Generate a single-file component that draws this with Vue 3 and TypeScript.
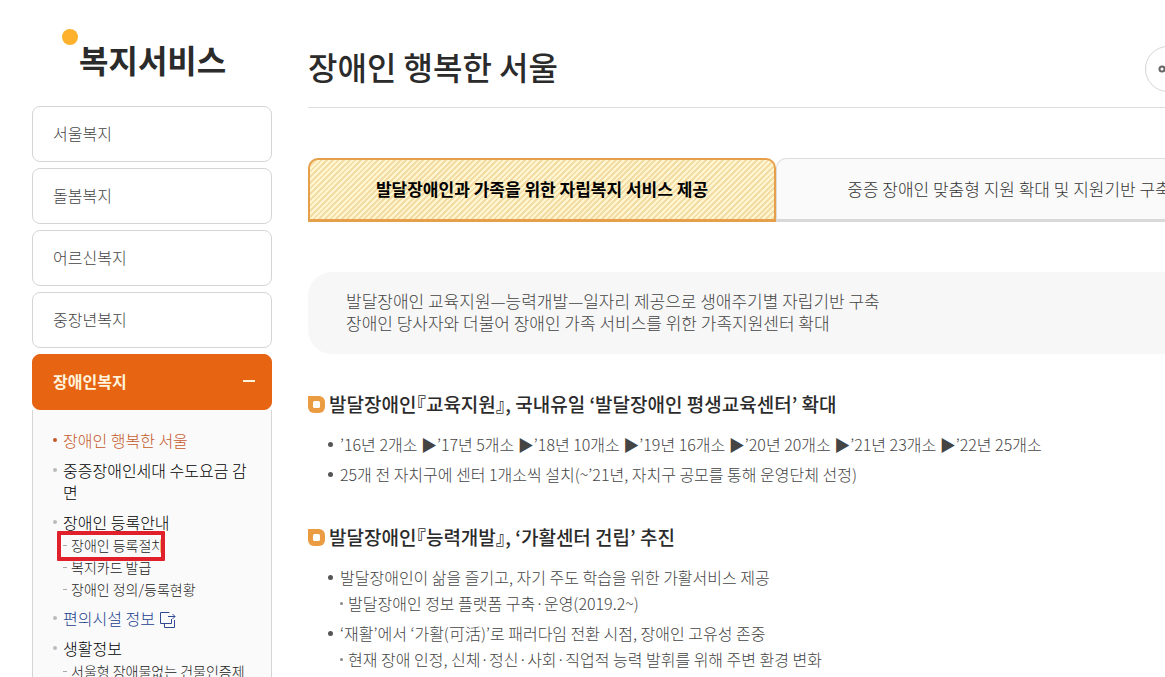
<script setup lang="ts">
interface SubItem {
  label: string
  marked?: boolean
}
interface MenuItem {
  label: string
  current?: boolean
  external?: boolean
  children?: SubItem[]
}
interface Point {
  text: string
  notes?: string[]
}
interface Section {
  title: string
  points: Point[]
}

const categories: string[] = ['서울복지', '돌봄복지', '어르신복지', '중장년복지']

const menu: MenuItem[] = [
  { label: '장애인 행복한 서울', current: true },
  { label: '중증장애인세대 수도요금 감면' },
  {
    label: '장애인 등록안내',
    children: [
      { label: '장애인 등록절차', marked: true },
      { label: '복지카드 발급' },
      { label: '장애인 정의/등록현황' },
    ],
  },
  { label: '편의시설 정보', external: true },
  { label: '생활정보', children: [{ label: '서울형 장애물없는 건물인증제' }] },
]

const tabs: string[] = [
  '발달장애인과 가족을 위한 자립복지 서비스 제공',
  '중증 장애인 맞춤형 지원 확대 및 지원기반 구축',
]

const sections: Section[] = [
  {
    title: '발달장애인『교육지원』, 국내유일 ‘발달장애인 평생교육센터’ 확대',
    points: [
      {
        text: '’16년 2개소 ▶’17년 5개소 ▶’18년 10개소 ▶’19년 16개소 ▶’20년 20개소 ▶’21년 23개소 ▶’22년 25개소',
      },
      { text: '25개 전 자치구에 센터 1개소씩 설치(~’21년, 자치구 공모를 통해 운영단체 선정)' },
    ],
  },
  {
    title: '발달장애인『능력개발』, ‘가활센터 건립’ 추진',
    points: [
      {
        text: '발달장애인이 삶을 즐기고, 자기 주도 학습을 위한 가활서비스 제공',
        notes: ['발달장애인 정보 플랫폼 구축·운영(2019.2~)'],
      },
      {
        text: '‘재활’에서 ‘가활(可活)’로 패러다임 전환 시점, 장애인 고유성 존중',
        notes: ['현재 장애 인정, 신체·정신·사회·직업적 능력 발휘를 위해 주변 환경 변화'],
      },
    ],
  },
]
</script>

<template>
  <div class="viewport">
    <div class="page">
      <aside class="side">
        <h2 class="side-title">복지서비스</h2>
        <nav class="side-nav">
          <a v-for="c in categories" :key="c" class="cat" href="#">{{ c }}</a>
          <div class="open-group">
            <button class="cat cat-open" type="button" aria-expanded="true">
              장애인복지
              <span class="minus"></span>
            </button>
            <ul class="menu">
              <li v-for="m in menu" :key="m.label" :class="{ current: m.current, external: m.external }">
                <a href="#">{{ m.label }}<svg v-if="m.external" class="ext" viewBox="0 0 16 16" width="16" height="16" aria-hidden="true"><path d="M9.5 .5h-9v11h11V7M4.500 12v3.500h10V8M8 4.500h7M12.500 2l2.500 2.500-2.500 2.500" /></svg></a>
                <ul v-if="m.children" class="sub">
                  <li v-for="s in m.children" :key="s.label" :class="{ marked: s.marked }">
                    <a href="#">{{ s.label }}</a>
                  </li>
                </ul>
              </li>
            </ul>
          </div>
        </nav>
      </aside>

      <main class="main">
        <header class="head">
          <h1>장애인 행복한 서울</h1>
          <div class="actions">
            <button type="button" aria-label="공유">
              <svg viewBox="0 0 20 20" width="20" height="20" aria-hidden="true">
                <circle cx="4" cy="10" r="2.500" /><circle cx="15" cy="4" r="2.500" /><circle cx="15" cy="16" r="2.500" />
                <path d="M6.500 9l6-4M6.500 11l6 4" />
              </svg>
            </button>
            <button type="button" aria-label="인쇄">
              <svg viewBox="0 0 20 20" width="20" height="20" aria-hidden="true">
                <path d="M5 7V3h10v4M5 14H3V7h14v7h-2M5 11h10v6H5z" />
              </svg>
            </button>
          </div>
        </header>

        <div class="tabs">
          <button v-for="(t, i) in tabs" :key="t" type="button" :class="['tab', { active: i === 0 }]">{{ t }}</button>
        </div>

        <p class="info">
          발달장애인 교육지원—능력개발—일자리 제공으로 생애주기별 자립기반 구축<br />
          장애인 당사자와 더불어 장애인 가족 서비스를 위한 가족지원센터 확대
        </p>

        <section v-for="s in sections" :key="s.title" class="section">
          <h3>
            <svg class="mark" viewBox="0 0 17 17" width="17" height="17" aria-hidden="true">
              <path class="mark-body" d="M0 0h11a6 6 0 0 1 6 6v5a6 6 0 0 1-6 6H6a6 6 0 0 1-6-6z" />
              <rect class="mark-hole" x="5" y="5" width="7" height="7" rx="1.500" />
            </svg>
            <span>{{ s.title }}</span>
          </h3>
          <ul class="points">
            <li v-for="p in s.points" :key="p.text">
              {{ p.text }}
              <ul v-if="p.notes" class="notes">
                <li v-for="n in p.notes" :key="n">{{ n }}</li>
              </ul>
            </li>
          </ul>
        </section>
      </main>
    </div>
  </div>
</template>

<style>
body {
  margin: 0;
  background: #fff;
}
</style>

<style scoped>
.viewport {
  height: 100vh;
  overflow: hidden;
  font-family: "Noto Sans CJK KR", "Liberation Sans", sans-serif;
  font-weight: 300;
  color: #444;
}
.page {
  display: flex;
  gap: 36px;
  min-width: 1242px;
  padding-left: 32px;
  box-sizing: border-box;
}
ul,
h1,
h2,
h3,
p {
  margin: 0;
  padding: 0;
  list-style: none;
}
a {
  color: inherit;
  text-decoration: none;
}
button {
  font: inherit;
  color: inherit;
  cursor: pointer;
}
.side {
  flex: 0 0 240px;
}
.side-title {
  position: relative;
  height: 106px;
  padding: 37px 0 0 47px;
  box-sizing: border-box;
  font-size: 32px;
  line-height: 44px;
  font-weight: 700;
  color: #2b2b2b;
}
.side-title::before {
  content: "";
  position: absolute;
  left: 30px;
  top: 29px;
  width: 16px;
  height: 16px;
  border-radius: 50%;
  background: #fdb12d;
}
.side-nav {
  display: flex;
  flex-direction: column;
  gap: 6px;
}
.cat {
  display: flex;
  align-items: center;
  justify-content: space-between;
  width: 100%;
  height: 56px;
  padding: 0 16px 2px 20px;
  box-sizing: border-box;
  border: 1px solid #d5d5d5;
  border-radius: 8px;
  background: #fff;
  font-size: 16px;
}
.cat-open {
  border-color: #e76412;
  background: #e76412;
  color: #fff3dc;
  font-weight: 700;
}
.minus {
  width: 12px;
  height: 2px;
  background: #fff3dc;
}
.open-group {
  background: #fafafa;
  border-radius: 8px;
}
.menu {
  display: flex;
  flex-direction: column;
  gap: 8px;
  padding: 19px 20px 24px 30px;
  border: 1px solid #d5d5d5;
  border-top: 0;
  font-size: 16px;
  line-height: 22px;
  color: #000;
  word-break: break-all;
}
.menu > li {
  position: relative;
}
.menu > li::before {
  content: "";
  position: absolute;
  left: -10px;
  top: 9px;
  width: 4px;
  height: 4px;
  border-radius: 50%;
  background: #bbb;
}
.menu > .current {
  color: #c4592a;
}
.menu > .current::before {
  background: #c4592a;
}
.menu > .external {
  color: #233f8f;
}
.ext {
  margin-left: 5px;
  vertical-align: -3px;
  fill: none;
  stroke: #2f4a93;
}
.sub {
  display: flex;
  flex-direction: column;
  gap: 2px;
  margin-top: 2px;
  padding-left: 8px;
  font-size: 14px;
  line-height: 20px;
  color: #222;
}
.sub li {
  position: relative;
}
.sub li::before {
  content: "";
  position: absolute;
  left: -8px;
  top: 10px;
  width: 4px;
  height: 1px;
  background: #aaa;
}
.sub .marked::after {
  content: "";
  position: absolute;
  left: -14px;
  top: -4px;
  width: 108px;
  height: 30px;
  box-sizing: border-box;
  border: 4px solid #e0202b;
  border-radius: 1px;
  z-index: 1;
}
.main {
  flex: 1;
  min-width: 0;
}
.head {
  display: flex;
  align-items: flex-start;
  justify-content: space-between;
  height: 108px;
  padding-top: 46px;
  box-sizing: border-box;
  border-bottom: 1px solid #ddd;
}
h1 {
  font-size: 32px;
  line-height: 40px;
  font-weight: 500;
  color: #2b2b2b;
}
.actions {
  display: flex;
  gap: 5px;
}
.actions button {
  display: grid;
  place-items: center;
  width: 46px;
  height: 46px;
  padding: 0;
  border: 1px solid #d5d5d5;
  border-radius: 50%;
  background: #fff;
}
.actions svg {
  fill: none;
  stroke: #666;
  stroke-width: 2;
}
.tabs {
  display: flex;
  margin-top: 50px;
}
.tab {
  flex: 1;
  height: 64px;
  padding: 0 0 2px;
  border: 1px solid #ddd;
  border-bottom: 3px solid #d9d9d9;
  border-radius: 10px 10px 0 0;
  background: #fafafa;
  font-size: 17px;
  color: #333;
  white-space: nowrap;
}
.tab.active {
  border: 2px solid #e6a04b;
  border-bottom-width: 3px;
  background: repeating-linear-gradient(135deg, #fff6d0 0 2px, #f3dca6 2px 4px) border-box;
  font-weight: 700;
  color: #000;
}
.info {
  margin-top: 50px;
  padding: 18px 38px 20px;
  border-radius: 24px 0 0 24px;
  background: #f7f7f7;
  font-size: 17px;
  line-height: 22px;
}
.section {
  margin-top: 37px;
}
.section + .section {
  margin-top: 39px;
}
h3 {
  display: flex;
  align-items: center;
  gap: 4px;
  font-size: 19px;
  line-height: 26px;
  font-weight: 500;
  font-feature-settings: "halt";
  color: #2b2b2b;
}
.mark-body {
  fill: #eb9b41;
}
.mark-hole {
  fill: #fff;
}
.points {
  display: flex;
  flex-direction: column;
  gap: 8px;
  margin-top: 16px;
  padding-left: 32px;
  font-size: 16px;
  line-height: 22px;
}
.points li {
  position: relative;
  white-space: nowrap;
}
.points > li::before {
  content: "";
  position: absolute;
  left: -12px;
  top: 9px;
  width: 5px;
  height: 5px;
  border-radius: 50%;
  background: #555;
}
.notes {
  margin-top: 4px;
  padding-left: 8px;
}
.notes li::before {
  content: "";
  position: absolute;
  left: -8px;
  top: 10px;
  width: 3px;
  height: 3px;
  border-radius: 50%;
  background: #888;
}
</style>
